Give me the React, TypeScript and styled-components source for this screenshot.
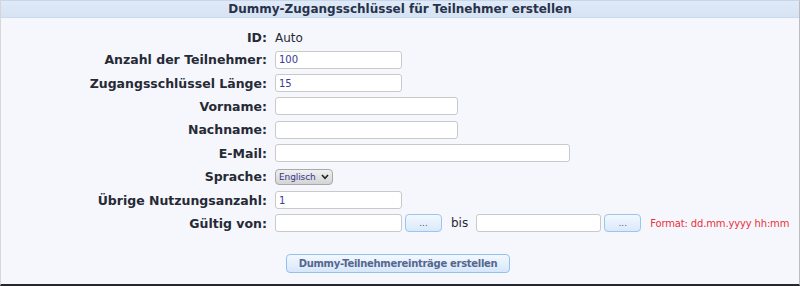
import React from 'react';
import styled, { createGlobalStyle } from 'styled-components';

const GlobalStyle = createGlobalStyle`
    html, body {
        margin: 0;
        padding: 0;
        background: #f6f7fd;
    }
    body {
        font-family: "DejaVu Sans", Verdana, sans-serif;
    }
`;

const Panel = styled.div`
    width: 800px;
    height: 286px;
    box-sizing: border-box;
    background: #f6f7fd;
    border-top: 1px solid #c6d6ec;
    border-left: 1px solid #d6d6d6;
    border-right: 1px solid #bcbcbc;
    border-bottom: 2px solid #26272d;
    display: flex;
    flex-direction: column;
`;

const Header = styled.div`
    height: 16px;
    background: linear-gradient(#e0eaf7, #d6e3f4);
    border-bottom: 1px solid #cbdaee;
    color: #28324a;
    font-size: 12px;
    font-weight: bold;
    line-height: 16px;
    text-align: center;
`;

const Form = styled.div`
    display: grid;
    grid-template-columns: 266px 1fr;
    grid-template-rows: 21px repeat(8, 23.4px);
    column-gap: 8px;
    padding-top: 9px;
    align-items: center;
`;

const Label = styled.div`
    text-align: right;
    font-size: 12.5px;
    font-weight: bold;
    color: #262a35;
`;

const Field = styled.div`
    display: flex;
    align-items: center;
    font-size: 12px;
    color: #262a35;
`;

const TextInput = styled.input<{ $width: number }>`
    width: ${p => p.$width}px;
    height: 18px;
    box-sizing: border-box;
    margin: 0;
    padding: 0 3px;
    border: 1px solid #c9c9c9;
    border-radius: 3px;
    background: #fff;
    font-family: "DejaVu Sans", sans-serif;
    font-size: 10px;
    color: #3b3b98;
    outline: none;
`;

const Select = styled.div`
    display: flex;
    align-items: center;
    gap: 5px;
    height: 14px;
    padding: 0 3px 0 3px;
    border: 1px solid #a9a9a9;
    border-radius: 4px;
    background: linear-gradient(#f0f0f0, #d4d4d4);
    font-size: 9px;
    letter-spacing: -0.1px;
    color: #34348e;
`;

const DotButton = styled.button`
    width: 37px;
    height: 18px;
    margin: 0 0 0 3px;
    padding: 0;
    border: 1px solid #9cc5ee;
    border-radius: 4px;
    background: linear-gradient(#f3f8fe, #d9e9fb);
    font-family: "DejaVu Sans", sans-serif;
    font-size: 9px;
    color: #4f5a72;
    line-height: 10px;
`;

const Bis = styled.span`
    margin: 0 8px 0 9px;
    font-size: 12px;
    color: #262a35;
`;

const Hint = styled.span`
    margin-left: 9px;
    font-size: 10px;
    letter-spacing: -0.15px;
    color: #ec2f3b;
`;

const Actions = styled.div`
    display: flex;
    justify-content: center;
    padding-top: 19px;
    padding-right: 4px;
`;

const SubmitButton = styled.button`
    width: 224px;
    height: 19px;
    margin: 0;
    padding: 0;
    border: 1px solid #93c1ee;
    border-radius: 4px;
    background: linear-gradient(#f3f8fe, #d6e7fa);
    font-family: "DejaVu Sans", sans-serif;
    font-size: 10px;
    letter-spacing: -0.3px;
    font-weight: bold;
    color: #55678f;
`;

const Chevron = () => (
    <svg width="8" height="6" viewBox="0 0 8 6">
        <path d="M1 1 L4 4.3 L7 1" fill="none" stroke="#222" strokeWidth="1.6" />
    </svg>
);

export default function App() {
    return (
        <>
            <GlobalStyle />
            <Panel>
                <Header>Dummy-Zugangsschlüssel für Teilnehmer erstellen</Header>
                <Form>
                    <Label>ID:</Label>
                    <Field>Auto</Field>

                    <Label>Anzahl der Teilnehmer:</Label>
                    <Field><TextInput $width={127} defaultValue="100" /></Field>

                    <Label>Zugangsschlüssel Länge:</Label>
                    <Field><TextInput $width={127} defaultValue="15" /></Field>

                    <Label>Vorname:</Label>
                    <Field><TextInput $width={183} /></Field>

                    <Label>Nachname:</Label>
                    <Field><TextInput $width={183} /></Field>

                    <Label>E-Mail:</Label>
                    <Field><TextInput $width={295} /></Field>

                    <Label>Sprache:</Label>
                    <Field><Select>Englisch <Chevron /></Select></Field>

                    <Label>Übrige Nutzungsanzahl:</Label>
                    <Field><TextInput $width={127} defaultValue="1" /></Field>

                    <Label>Gültig von:</Label>
                    <Field>
                        <TextInput $width={127} />
                        <DotButton>...</DotButton>
                        <Bis>bis</Bis>
                        <TextInput $width={125} />
                        <DotButton>...</DotButton>
                        <Hint>Format: dd.mm.yyyy hh:mm</Hint>
                    </Field>
                </Form>
                <Actions>
                    <SubmitButton>Dummy-Teilnehmereinträge erstellen</SubmitButton>
                </Actions>
            </Panel>
        </>
    );
}
